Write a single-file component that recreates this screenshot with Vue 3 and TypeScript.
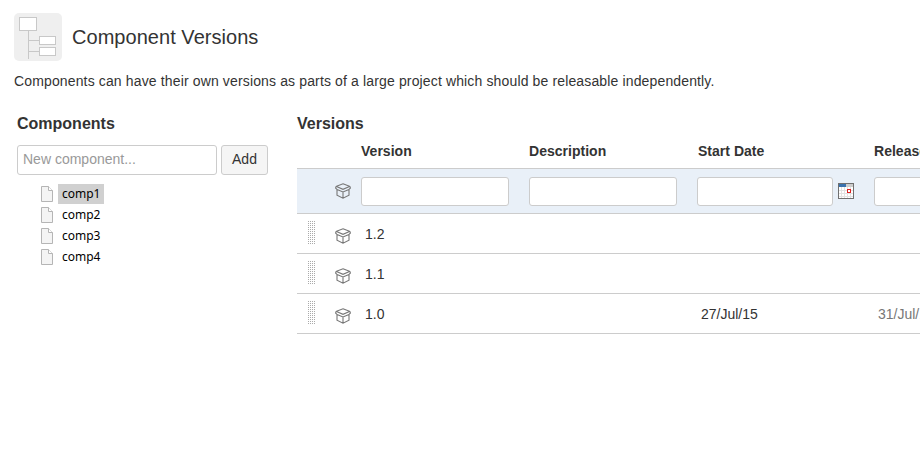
<template>
  <div class="page">
    <header class="title-row">
      <div class="logo">
        <svg width="48" height="48" viewBox="0 0 48 48">
          <g fill="#fff" stroke="#c8c8c8" stroke-width="1">
            <rect x="5.5" y="4.5" width="17" height="13" />
            <rect x="25.500" y="23.500" width="16" height="8" />
            <rect x="25.500" y="34.500" width="16" height="8" />
          </g>
          <path d="M14.500 18v28M15 27.500h10M15 38.500h10" stroke="#c8c8c8" fill="none" />
        </svg>
      </div>
      <h1>Component Versions</h1>
    </header>
    <p class="intro">
      Components can have their own versions as parts of a large project which should be releasable independently.
    </p>

    <div class="columns">
      <aside class="left">
        <h2>Components</h2>
        <div class="add-row">
          <input class="new-input" type="text" placeholder="New component..." />
          <button class="add-btn">Add</button>
        </div>
        <ul class="tree">
          <li v-for="(c, idx) in components" :key="c">
            <svg class="file" width="12" height="16" viewBox="0 0 12 16">
              <path d="M.5.5h7l4 4v11h-11z" fill="#f4f4f4" stroke="#b5b5b5" />
              <path d="M7.500.5v4h4" fill="#fff" stroke="#b5b5b5" />
            </svg>
            <span class="name" :class="{ selected: idx === 0 }">{{ c }}</span>
          </li>
        </ul>
      </aside>

      <section class="right">
        <h2>Versions</h2>
        <div class="row head">
          <div></div>
          <div v-for="h in headers" :key="h" class="th">{{ h }}</div>
        </div>
        <div class="row filter">
          <div class="icon-cell">
            <svg class="cube" width="16" height="16" viewBox="0 0 16 16">
              <path d="M8 .8l6.500 2.400q.8.3.8 1.200v.8L14 6.400v5.800L8 15.200l-6-3V6.400L.7 5.200v-.8q0-.9.8-1.200zM2 6.400l6 2.600 6-2.600M8 9v6.200M1.500 3.600L8 6.300l6.500-2.700" fill="none" stroke="#777" stroke-width="1.100" />
            </svg>
          </div>
          <div class="cell"><input class="field wide" type="text" /></div>
          <div class="cell"><input class="field wide" type="text" /></div>
          <div class="cell date-cell">
            <input class="field date" type="text" />
            <svg class="cal" width="16" height="16" viewBox="0 0 16 16">
              <rect x=".5" y=".5" width="15" height="15" fill="#fff" stroke="#707070" />
              <rect x="1" y="1" width="14" height="3" fill="#ccc" />
              <rect x="1" y="1" width="7" height="3" fill="#3a72ae" />
              <path d="M1 7.500h14M1 10.500h14M1 13.500h14M3.500 4v11M6.500 4v11M9.500 4v11M12.500 4v11" stroke="#e2e2e2" />
              <rect x="9.500" y="6.500" width="3" height="3" fill="#fff" stroke="#d22" />
            </svg>
          </div>
          <div class="cell"><input class="field wide" type="text" /></div>
        </div>
        <div v-for="v in versions" :key="v.name" class="row body">
          <div class="icon-cell">
            <span class="grip"></span>
            <svg class="cube" width="16" height="16" viewBox="0 0 16 16">
              <path d="M8 .8l6.500 2.400q.8.3.8 1.200v.8L14 6.400v5.800L8 15.200l-6-3V6.400L.7 5.200v-.8q0-.9.8-1.200zM2 6.400l6 2.600 6-2.600M8 9v6.200M1.500 3.600L8 6.300l6.500-2.700" fill="none" stroke="#777" stroke-width="1.100" />
            </svg>
          </div>
          <div class="td">{{ v.name }}</div>
          <div class="td"></div>
          <div class="td date-text">{{ v.start }}</div>
          <div class="td released">{{ v.release }}</div>
        </div>
      </section>
    </div>
  </div>
</template>

<script setup lang="ts">
interface IVersion {
  name: string
  start: string
  release: string
}

const components: string[] = ['comp1', 'comp2', 'comp3', 'comp4']
const headers: string[] = ['Version', 'Description', 'Start Date', 'Release Date']
const versions: IVersion[] = [
  { name: '1.2', start: '', release: '' },
  { name: '1.1', start: '', release: '' },
  { name: '1.0', start: '27/Jul/15', release: '31/Jul/15' }
]
</script>

<style>
html,
body {
  overflow: hidden;
  background: #fff;
}
</style>

<style scoped>
.page {
  width: 920px;
  height: 450px;
  overflow: hidden;
  box-sizing: border-box;
  padding: 13px 0 0 14px;
  font-family: 'Liberation Sans', Arial, sans-serif;
  font-size: 14px;
  color: #333;
}
.title-row {
  display: flex;
  align-items: center;
  gap: 10px;
}
.logo {
  width: 48px;
  height: 48px;
  background: #efefef;
  border-radius: 5px;
}
.logo svg {
  display: block;
}
h1 {
  margin: 0 0 1px;
  font-size: 20px;
  font-weight: 400;
  line-height: 24px;
  letter-spacing: 0.04px;
}
.intro {
  margin: 10px 0 0;
  line-height: 20px;
  letter-spacing: 0.14px;
}
.columns {
  display: flex;
  margin: 23px 0 0 3px;
}
.left {
  width: 280px;
  flex: none;
}
.right {
  width: 760px;
  flex: none;
}
h2 {
  margin: 0;
  font-size: 16px;
  font-weight: 700;
  line-height: 20px;
}
.add-row {
  display: flex;
  gap: 4px;
  margin-top: 11px;
}
.new-input {
  width: 200px;
  height: 30px;
  box-sizing: border-box;
  padding: 0 5px 2px;
  border: 1px solid #ccc;
  border-radius: 3px;
  font: 14px 'Liberation Sans', Arial, sans-serif;
  color: #333;
  outline: none;
}
.new-input::placeholder {
  color: #999;
  opacity: 1;
}
.add-btn {
  width: 47px;
  height: 30px;
  padding: 0 0 2px;
  background: #f5f5f5;
  border: 1px solid #ccc;
  border-radius: 3px;
  font: 14px 'Liberation Sans', Arial, sans-serif;
  color: #333;
}
.tree {
  list-style: none;
  margin: 8px 0 0;
  padding: 0 0 0 24px;
}
.tree li {
  display: flex;
  align-items: center;
  height: 21px;
}
.file {
  flex: none;
}
.name {
  margin-left: 5px;
  padding: 0 4px;
  line-height: 20px;
  font-family: 'Noto Sans', sans-serif;
  font-size: 12px;
  color: #000;
}
.name.selected {
  background: #d0d0d0;
}
.row {
  display: grid;
  grid-template-columns: 64px 168px 169px 176px 200px;
  box-sizing: border-box;
  border-bottom: 1px solid #ccc;
}
.head {
  height: 35px;
  align-items: center;
  padding-bottom: 1px;
}
.th {
  font-size: 14px;
  font-weight: 700;
  letter-spacing: 0.02px;
}
.filter {
  height: 45px;
  background: #e9f0f8;
  align-items: center;
}
.body {
  height: 40px;
  align-items: center;
}
.icon-cell {
  display: flex;
  justify-content: flex-end;
  align-items: center;
  padding-right: 10px;
  position: relative;
  height: 100%;
}
.body .cube {
  margin-top: 4px;
}
.grip {
  position: absolute;
  left: 11px;
  top: 7px;
  width: 8px;
  height: 24px;
  background-image: radial-gradient(circle at 0.5px 0.5px, #aaa 0.7px, transparent 0.8px);
  background-size: 2px 2px;
}
.cell {
  display: flex;
  align-items: center;
}
.field {
  height: 29px;
  box-sizing: border-box;
  border: 1px solid #ccc;
  border-radius: 3px;
  background: #fff;
  outline: none;
}
.wide {
  width: 148px;
}
.date {
  width: 136px;
  margin-left: -1px;
}
.cal {
  margin-left: 5px;
}
.date-cell {
  min-width: 0;
}
.td {
  padding-left: 4px;
  white-space: nowrap;
}
.date-text {
  padding-left: 3px;
}
.released {
  color: #777;
}
</style>
